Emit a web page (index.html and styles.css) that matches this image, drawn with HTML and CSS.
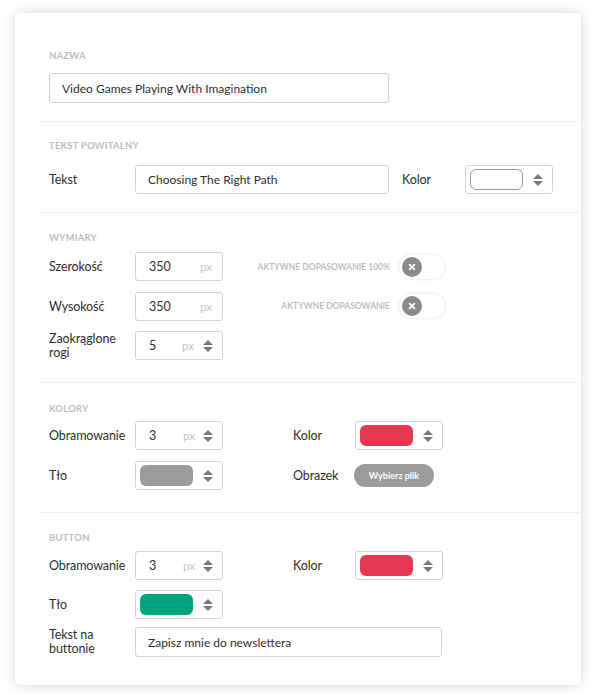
FILE: index.html
```html
<!DOCTYPE html>
<html lang="pl">
<head>
<meta charset="utf-8">
<title>Ustawienia</title>
<link rel="stylesheet" href="styles.css">
</head>
<body>
<div class="card">
  <section class="sec sec-1">
    <div class="head">Nazwa</div>
    <div class="field wide">Video Games Playing With Imagination</div>
  </section>

  <section class="sec sec-2">
    <div class="head">Tekst powitalny</div>
    <div class="row r-welcome">
      <div class="lbl">Tekst</div>
      <div class="field">Choosing The Right Path</div>
      <div class="lbl lbl-kolor-w">Kolor</div>
      <div class="color"><span class="sw sw-white"></span><span class="spin"><i class="up"></i><i class="dn"></i></span></div>
    </div>
  </section>

  <section class="sec sec-3">
    <div class="head">Wymiary</div>
    <div class="rows">
      <div class="row r-dim">
        <div class="lbl">Szerokość</div>
        <div class="num"><span class="val">350</span><span class="unit">px</span></div>
        <div class="tlbl">Aktywne dopasowanie 100%</div>
        <div class="toggle"><span class="knob"><svg viewBox="0 0 10 10" width="8" height="8"><path d="M2 2L8 8M8 2L2 8" stroke="#fff" stroke-width="2.2" stroke-linecap="round"/></svg></span></div>
      </div>
      <div class="row r-dim">
        <div class="lbl">Wysokość</div>
        <div class="num"><span class="val">350</span><span class="unit">px</span></div>
        <div class="tlbl">Aktywne dopasowanie</div>
        <div class="toggle"><span class="knob"><svg viewBox="0 0 10 10" width="8" height="8"><path d="M2 2L8 8M8 2L2 8" stroke="#fff" stroke-width="2.2" stroke-linecap="round"/></svg></span></div>
      </div>
      <div class="row r-dim">
        <div class="lbl two"><span>Zaokrąglone</span><span>rogi</span></div>
        <div class="num"><span class="val">5</span><span class="unit">px</span><span class="spin"><i class="up"></i><i class="dn"></i></span></div>
      </div>
    </div>
  </section>

  <section class="sec sec-4">
    <div class="head">Kolory</div>
    <div class="rows">
      <div class="row r-col">
        <div class="lbl">Obramowanie</div>
        <div class="num"><span class="val">3</span><span class="unit">px</span><span class="spin"><i class="up"></i><i class="dn"></i></span></div>
        <div class="lbl lbl-right">Kolor</div>
        <div class="color"><span class="sw sw-red"></span><span class="spin"><i class="up"></i><i class="dn"></i></span></div>
      </div>
      <div class="row r-col">
        <div class="lbl">Tło</div>
        <div class="color"><span class="sw sw-gray"></span><span class="spin"><i class="up"></i><i class="dn"></i></span></div>
        <div class="lbl lbl-right">Obrazek</div>
        <div class="filebtn-wrap"><span class="filebtn">Wybierz plik</span></div>
      </div>
    </div>
  </section>

  <section class="sec sec-5">
    <div class="head">Button</div>
    <div class="rows">
      <div class="row r-col">
        <div class="lbl">Obramowanie</div>
        <div class="num"><span class="val">3</span><span class="unit">px</span><span class="spin"><i class="up"></i><i class="dn"></i></span></div>
        <div class="lbl lbl-right">Kolor</div>
        <div class="color"><span class="sw sw-red"></span><span class="spin"><i class="up"></i><i class="dn"></i></span></div>
      </div>
      <div class="row r-col">
        <div class="lbl">Tło</div>
        <div class="color"><span class="sw sw-green"></span><span class="spin"><i class="up"></i><i class="dn"></i></span></div>
      </div>
      <div class="row r-text">
        <div class="lbl two"><span>Tekst na</span><span>buttonie</span></div>
        <div class="field">Zapisz mnie do newslettera</div>
      </div>
    </div>
  </section>
</div>
</body>
</html>
```

FILE: styles.css
```css
* { box-sizing: border-box; }
html, body { margin: 0; padding: 0; background: #fff; }
body {
  font-family: Lato, "Liberation Sans", sans-serif;
  color: #2e2e2e;
  font-size: 12px;
  padding: 13px 16px 14px 15px;
}
.card {
  width: 566px;
  height: 672px;
  background: #fff;
  border-radius: 5px;
  box-shadow: 0 0 14px rgba(0,0,0,0.16);
  overflow: hidden;
}
.sec {
  margin-left: 25px;
  padding: 18px 0 21px 9px;
  border-bottom: 1px solid #f0f0f0;
}
.sec-1 { padding-top: 37px; padding-bottom: 18px; }
.sec-2 { padding-top: 18px; padding-bottom: 18px; }
.sec-3 { padding-top: 19px; padding-bottom: 22px; }
.sec-4 { padding-top: 20px; padding-bottom: 22px; }
.sec-5 { border-bottom: none; padding-top: 19px; }
.head {
  font-size: 9.5px;
  line-height: 11px;
  font-weight: 700;
  color: #bdbdbd;
  text-transform: uppercase;
  letter-spacing: 0.2px;
  margin-bottom: 9px;
}
.sec-1 .head { margin-bottom: 12px; }
.sec-2 .head { margin-bottom: 14px; }
.sec-4 .head { margin-bottom: 7px; }
.sec-5 .head { margin-bottom: 8px; }
.rows { display: flex; flex-direction: column; gap: 10px; }
.sec-3 .rows { gap: 10.5px; }
.sec-4 .rows { gap: 11px; }
.row { display: flex; align-items: center; height: 29px; }
.r-text { height: 30px; margin-top: -2px; }
.lbl { width: 86px; flex: none; font-size: 12.5px; color: #2e2e2e; letter-spacing: -0.1px; }
.lbl.two { display: flex; flex-direction: column; line-height: 14px; }
.field {
  height: 30px;
  border: 1px solid #d2d2d2;
  border-radius: 3px;
  padding: 0 12px;
  display: flex;
  align-items: center;
  font-size: 12px;
  color: #2e2e2e;
  background: #fff;
}
.field.wide { width: 340px; }
.r-welcome .field { width: 254px; height: 29px; }
.lbl-kolor-w { width: 63px; margin-left: 13px; }
.r-text .field { width: 307px; }
.num {
  width: 88px;
  height: 29px;
  flex: none;
  border: 1px solid #d2d2d2;
  border-radius: 3px;
  display: flex;
  align-items: center;
  padding: 0 9px 0 13px;
  font-size: 12.5px;
}
.num .val { flex: 1; }
.num .unit { color: #c4c4c4; font-size: 11.5px; }
.num .spin { margin-left: 8px; }
.r-dim .num .unit { margin-right: 1px; }
.spin { display: flex; flex-direction: column; gap: 2px; width: 10px; flex: none; }
.spin i {
  display: block; width: 0; height: 0;
  border-left: 5px solid transparent;
  border-right: 5px solid transparent;
}
.spin .up { border-bottom: 5px solid #777; }
.spin .dn { border-top: 5px solid #777; }
.color {
  width: 88px;
  height: 29px;
  flex: none;
  border: 1px solid #d2d2d2;
  border-radius: 3px;
  display: flex;
  align-items: center;
  justify-content: space-between;
  padding: 0 9px 0 4px;
}
.sw { width: 53px; height: 21px; border-radius: 6px; display: block; }
.sw-white { border: 1px solid #9a9a9a; background: #fff; }
.sw-red { background: #e43851; }
.sw-gray { background: #9b9b9b; }
.sw-green { background: #00a47a; }
.lbl-right { width: 62px; margin-left: 70px; }
.tlbl {
  width: 167px;
  flex: none;
  text-align: right;
  font-size: 8.5px;
  font-weight: 700;
  color: #bdbdbd;
  text-transform: uppercase;
}
.toggle {
  width: 48px;
  height: 26px;
  margin-left: 8px;
  border-radius: 13px;
  background: #fff;
  border: 1px solid #f2f2f2;
  box-shadow: 0 0 3px rgba(0,0,0,0.06);
  display: flex;
  align-items: center;
  padding-left: 3px;
}
.knob {
  width: 20px; height: 20px; border-radius: 50%;
  background: #8a8a8a;
  display: flex; align-items: center; justify-content: center;
}
.filebtn-wrap { display: flex; align-items: center; }
.filebtn {
  display: flex; align-items: center; justify-content: center;
  width: 80px; height: 23px; margin-left: -1px;
  border-radius: 12px;
  background: #9b9b9b;
  color: #fff;
  font-size: 9px;
  font-weight: 700;
}
```
